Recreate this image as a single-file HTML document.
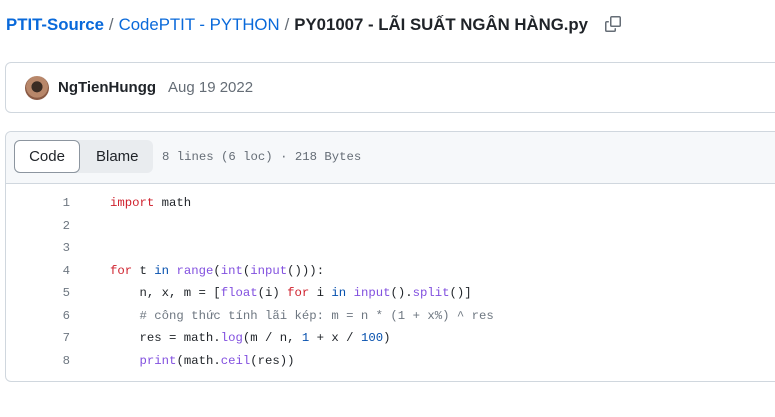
<!DOCTYPE html>
<html><head><meta charset="utf-8"><style>
body{margin:0;width:775px;height:417px;background:#fff;font-family:"Liberation Sans",sans-serif;color:#1f2328;overflow:hidden;position:relative}
.bc{position:absolute;left:6px;top:15px;font-size:16.8px;white-space:nowrap}
.bc a{color:#0969da;text-decoration:none}
.bc .s{color:#656d76;margin:0 5px}
.bc b{font-weight:600}
.box{position:absolute;left:5px;right:-10px;border:1px solid #d0d7de;border-radius:6px}
.auth{top:62px;height:49px}
.av{position:absolute;left:19px;top:13px;width:24px;height:24px;border-radius:50%;background:radial-gradient(circle at 50% 45%,#3a2c24 0 30%,#b8876a 32% 60%,#8a5a44 62%)}
.an{position:absolute;left:52px;top:16px;font-size:15px;font-weight:600}
.ad{position:absolute;left:162px;top:16px;font-size:15px;color:#656d76}
.code{top:131px;height:249px}
.hdr{height:51px;background:#f6f8fa;border-bottom:1px solid #d0d7de;border-radius:6px 6px 0 0;position:relative}
.seg{position:absolute;left:8px;top:8px;width:139px;height:33px;background:#e9ecef;border-radius:6px}
.bt1{position:absolute;left:8px;top:8px;width:64px;height:31px;border:1px solid #8c959f;border-radius:6px;background:#fff;font-size:15px;line-height:31px;text-align:center}
.bt2{position:absolute;left:90px;top:8px;font-size:15px;line-height:33px}
.meta{position:absolute;left:156px;top:18px;font-family:"Liberation Mono",monospace;font-size:12.3px;color:#656d76}
pre{margin:0;position:absolute;top:60px;font-family:"Liberation Mono",monospace;font-size:12.3px;line-height:22.57px}
.ln{left:30px;width:34px;text-align:right;color:#6e7781}
.src{left:104px;color:#1f2328}
.k{color:#cf222e}.f{color:#8250df}.n{color:#0550ae}.c{color:#6e7781}
</style></head><body>
<div class="bc"><a href="#"><b>PTIT-Source</b></a><span class="s">/</span><a href="#">CodePTIT - PYTHON</a><span class="s">/</span><b>PY01007 - LÃI SUẤT NGÂN HÀNG.py</b>
<svg width="16" height="16" viewBox="0 0 16 16" style="margin-left:12px;vertical-align:-2px" fill="#656d76"><path d="M0 6.75C0 5.780.78 5 1.75 5h1.5a.75.75 0 0 1 0 1.5h-1.5a.25.25 0 0 0-.25.25v7.5c0 .14.11.25.25.25h7.5a.25.25 0 0 0 .25-.25v-1.5a.75.75 0 0 1 1.5 0v1.5A1.75 1.75 0 0 1 9.25 16h-7.5A1.75 1.75 0 0 1 0 14.25Z"/><path d="M5 1.75C5 .78 5.78 0 6.75 0h7.5C15.22 0 16 .78 16 1.75v7.5A1.75 1.75 0 0 1 14.25 11h-7.5A1.75 1.75 0 0 1 5 9.25Zm1.75-.25a.25.25 0 0 0-.25.25v7.5c0 .14.11.25.25.25h7.5a.25.25 0 0 0 .25-.25v-7.5a.25.25 0 0 0-.25-.25Z"/></svg></div>
<div class="box auth"><div class="av"></div><div class="an">NgTienHungg</div><div class="ad">Aug 19 2022</div></div>
<div class="box code"><div class="hdr"><div class="seg"></div><div class="bt1">Code</div><div class="bt2">Blame</div><div class="meta">8 lines (6 loc) · 218 Bytes</div></div>
<pre class="ln">1
2
3
4
5
6
7
8</pre>
<pre class="src"><span class="k">import</span> math


<span class="k">for</span> t <span class="n">in</span> <span class="f">range</span>(<span class="f">int</span>(<span class="f">input</span>())):
    n, x, m = [<span class="f">float</span>(i) <span class="k">for</span> i <span class="n">in</span> <span class="f">input</span>().<span class="f">split</span>()]
    <span class="c"># công thức tính lãi kép: m = n * (1 + x%) ^ res</span>
    res = math.<span class="f">log</span>(m / n, <span class="n">1</span> + x / <span class="n">100</span>)
    <span class="f">print</span>(math.<span class="f">ceil</span>(res))</pre>
</div>
</body></html>
